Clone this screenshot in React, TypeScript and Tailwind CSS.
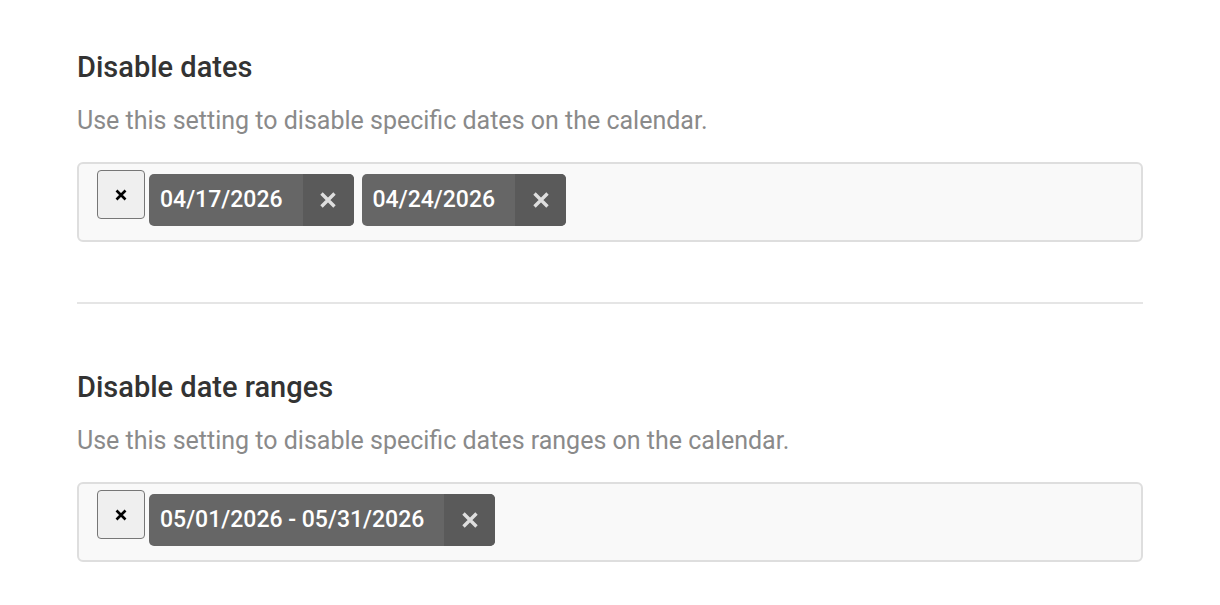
import React from "react";

function ChipX() {
    return (
        <svg width="18" height="18" viewBox="0 0 18 18" aria-hidden="true">
            <path
                d="M2.5 2.5 L15.5 15.5 M15.5 2.5 L2.5 15.5"
                stroke="#dedede"
                strokeWidth="3.4"
                strokeLinecap="butt"
            />
        </svg>
    );
}

function Chip({ label }: { label: string }) {
    return (
        <div className="mt-[4px] flex h-[52px] overflow-hidden rounded-[5px] bg-[#666666] text-white">
            <span className="flex items-center pr-[20px] pl-[11px] text-[23px] font-medium">
                {label}
            </span>
            <span className="flex w-[51px] items-center justify-center bg-[#5a5a5a]">
                <ChipX />
            </span>
        </div>
    );
}

function Section({
    title,
    description,
    chips,
}: {
    title: string;
    description: string;
    chips: string[];
}) {
    return (
        <section>
            <h2 className="text-[29px] leading-[34px] font-medium text-[#333333]">
                {title}
            </h2>
            <p className="mt-[22px] text-[25px] leading-[30px] text-[#8a8a8a]">
                {description}
            </p>
            <div className="mt-[26px] flex h-[80px] items-start gap-[4px] rounded-[6px] border-2 border-[#dedede] bg-[#f9f9f9] pt-[6px] pl-[18px]">
                <button className="flex h-[49px] w-[48px] items-center justify-center rounded-[4px] border-[1.5px] border-[#767676] bg-[#efefef]">
                    <svg width="14" height="12" viewBox="0 0 14 12" aria-hidden="true">
                        <path
                            d="M2.5 1.5 L11.5 10.5 M11.5 1.5 L2.5 10.5"
                            stroke="#000"
                            strokeWidth="2.6"
                        />
                    </svg>
                </button>
                <div className="flex gap-[8px]">
                    {chips.map((c) => (
                        <Chip key={c} label={c} />
                    ))}
                </div>
            </div>
        </section>
    );
}

export default function App() {
    return (
        <main
            className="min-h-[605px] bg-white px-[77px] pt-[50px]"
            style={{ fontFamily: "Roboto, 'Liberation Sans', sans-serif" }}
        >
            <div className="w-[1066px]">
                <Section
                    title="Disable dates"
                    description="Use this setting to disable specific dates on the calendar."
                    chips={["04/17/2026", "04/24/2026"]}
                />
                <hr className="mt-[60px] mb-0 border-t-2 border-[#e5e5e5]" />
                <div className="mt-[66px]">
                    <Section
                        title="Disable date ranges"
                        description="Use this setting to disable specific dates ranges on the calendar."
                        chips={["05/01/2026 - 05/31/2026"]}
                    />
                </div>
            </div>
        </main>
    );
}
